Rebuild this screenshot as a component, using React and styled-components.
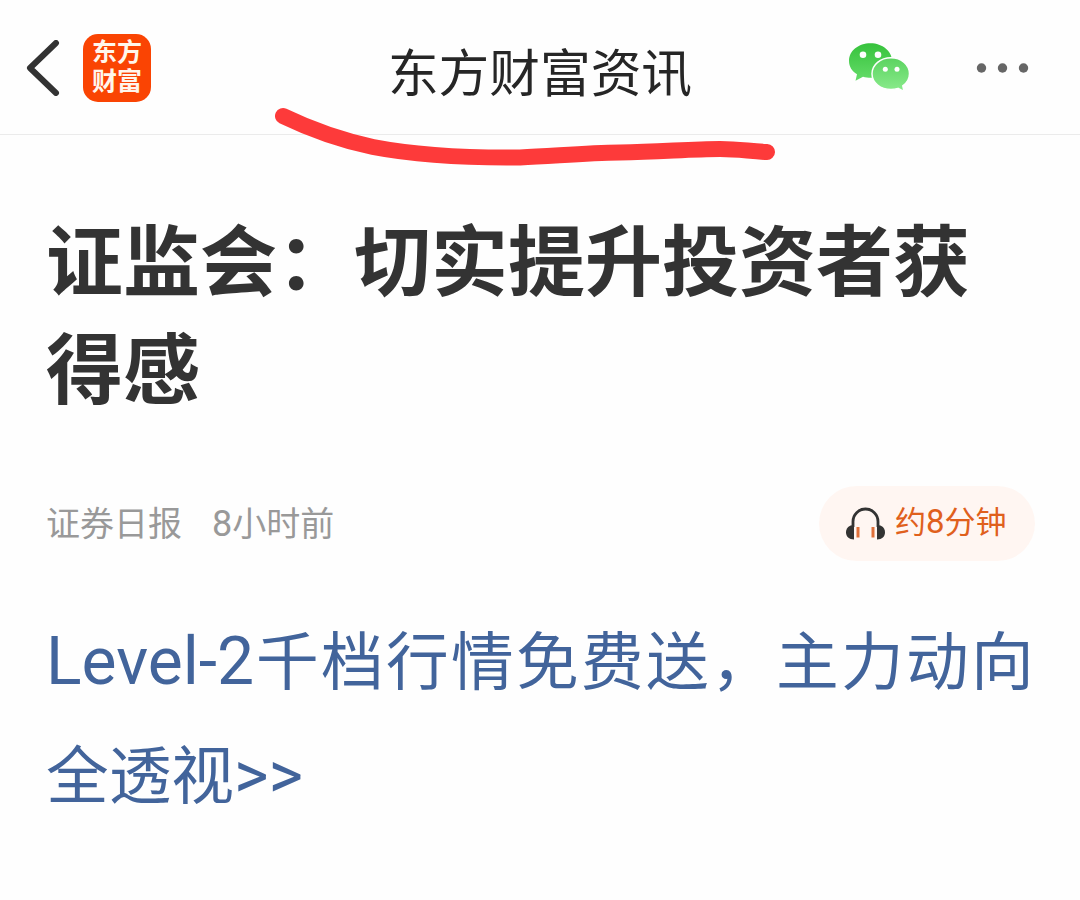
import styled, { createGlobalStyle } from 'styled-components'

const GlobalStyle = createGlobalStyle`
  * {
    box-sizing: border-box;
  }
  body {
    margin: 0;
    background: #fefefe;
    font-family: Roboto, 'Noto Sans CJK SC', sans-serif;
    overflow: hidden;
  }
`

const Page = styled.div`
  position: relative;
  width: 1080px;
  height: 900px;
`

const Header = styled.header`
  display: grid;
  grid-template-columns: 300px 1fr 300px;
  align-items: center;
  height: 135px;
  border-bottom: 1px solid #ebebeb;
`

const HeaderLeft = styled.div`
  display: flex;
  align-items: center;
  gap: 23px;
  padding: 1px 0 0 26px;
`

const HeaderRight = styled.div`
  display: flex;
  align-items: center;
  gap: 66px;
  padding: 1px 0 0 67px;
`

const Logo = styled.div`
  display: flex;
  flex-direction: column;
  align-items: center;
  justify-content: center;
  width: 68px;
  height: 68px;
  padding-bottom: 2px;
  border-radius: 15px;
  background: #fa4403;
  color: #fff6ec;
  font-size: 25px;
  font-weight: 700;
  line-height: 29px;
`

const HeaderTitle = styled.div`
  padding-top: 15px;
  text-align: center;
  color: #262626;
  font-size: 50.7px;
  line-height: 60px;
  white-space: nowrap;
`

const Underline = styled.svg`
  position: absolute;
  top: 100px;
  left: 265px;
`

const Article = styled.main`
  padding: 75px 45px 0 46px;
`

const Headline = styled.h1`
  margin: 0;
  color: #333;
  font-size: 77px;
  font-weight: 700;
  line-height: 108px;
`

const MetaRow = styled.div`
  display: flex;
  align-items: center;
  justify-content: space-between;
  height: 75px;
  margin-top: 60px;
`

const Meta = styled.div`
  display: flex;
  gap: 30px;
  color: #999;
  font-size: 34px;
  line-height: 50px;
`

const ListenButton = styled.button`
  display: flex;
  align-items: center;
  gap: 10px;
  width: 216px;
  height: 75px;
  padding: 0 0 0 27px;
  border: 0;
  border-radius: 38px;
  background: #fff6f2;
  color: #e0601c;
  font-family: inherit;
  font-size: 31px;
  white-space: nowrap;
`

const ListenText = styled.span`
  line-height: 40px;
  padding-bottom: 2px;
`

const Promo = styled.a`
  display: block;
  margin-top: 44px;
  color: #42649b;
  font-size: 62.7px;
  line-height: 113px;
`

const Line = styled.div`
  white-space: nowrap;
  letter-spacing: ${(props) => props.$spacing || '0'};
`

const Latin = styled.span`
  margin-right: ${(props) => props.$gap || '0'};
  font-size: ${(props) => props.$size || '66px'};
  letter-spacing: 0;
`

function BackIcon() {
  return (
    <svg width="34" height="56" viewBox="0 0 34 56" fill="none">
      <path
        d="M30 3 L4 28 L30 53"
        stroke="#333"
        strokeWidth="6"
        strokeLinecap="round"
        strokeLinejoin="round"
      />
    </svg>
  )
}

function WechatIcon() {
  return (
    <svg width="62" height="50" viewBox="0 0.7 62 50">
      <defs>
        <linearGradient id="back" x1="0" y1="0" x2="0" y2="1">
          <stop offset="0" stopColor="#36c23c" />
          <stop offset="1" stopColor="#65dc69" />
        </linearGradient>
        <linearGradient id="front" x1="0" y1="0" x2="0" y2="1">
          <stop offset="0" stopColor="#5bd360" />
          <stop offset="1" stopColor="#8aeb8c" />
        </linearGradient>
      </defs>
      <path
        d="M23.500 1C11.500 1 2 8.500 2 18.500c0 6 3 10.500 8 13.500L8.500 38.500l7.500-4c2.500.8 5 1 8 1 12 0 21-7.500 21-17S35.500 1 23.500 1z"
        fill="url(#back)"
      />
      <path
        d="M44 15.500C33.500 15.500 25 22.500 25 31.500S33.500 47.200 44 47.200c2.500 0 4.800-.4 7-1.100l6 3-1.200-5.500c4-2.800 6.700-7 6.700-12.100C62.500 22.500 54.500 15.500 44 15.500z"
        fill="url(#front)"
        stroke="#fefefe"
        strokeWidth="1.500"
      />
      <g fill="#fefefe">
        <circle cx="16" cy="12.500" r="3.300" />
        <circle cx="31" cy="12.500" r="3.300" />
        <circle cx="38.300" cy="27" r="2.500" />
        <circle cx="50" cy="27" r="2.500" />
      </g>
    </svg>
  )
}

function MoreIcon() {
  return (
    <svg width="54" height="12" viewBox="0 0 54 12" fill="#666">
      <circle cx="6.500" cy="6" r="4.700" />
      <circle cx="27.500" cy="6" r="4.700" />
      <circle cx="48.500" cy="6" r="4.700" />
    </svg>
  )
}

function HeadphonesIcon() {
  return (
    <svg width="39" height="33" viewBox="0 0 39 33">
      <path
        d="M7 20V14.500a12.500 12.500 0 0 1 25 0V20"
        fill="none"
        stroke="#333"
        strokeWidth="2.800"
      />
      <path d="M8 18v14.500C3 32.500 0 29.500 0 25.300S3 18 8 18z" fill="#333" />
      <path d="M31 18v14.500c5 0 8-3 8-7.200S36 18 31 18z" fill="#333" />
      <path d="M12 20v10.500M27 20v10.500" stroke="#e0703a" strokeWidth="3" />
    </svg>
  )
}

function App() {
  return (
    <Page>
      <GlobalStyle />
      <Header>
        <HeaderLeft>
          <BackIcon />
          <Logo>
            <span>东方</span>
            <span>财富</span>
          </Logo>
        </HeaderLeft>
        <HeaderTitle>东方财富资讯</HeaderTitle>
        <HeaderRight>
          <WechatIcon />
          <MoreIcon />
        </HeaderRight>
      </Header>
      <Underline width="520" height="76" viewBox="265 100 520 76">
        <path
          d="M283 116C312 130 345 141 373 147C420 156 470 158 520 157.500C555 156 585 153 620 152.500C660 152 690 149 720 149C740 149 750 151.500 767 152"
          fill="none"
          stroke="#fd3a3a"
          strokeWidth="16"
          strokeLinecap="round"
          strokeLinejoin="round"
        />
      </Underline>
      <Article>
        <Headline>证监会：切实提升投资者获得感</Headline>
        <MetaRow>
          <Meta>
            <span>证券日报</span>
            <span>
              <Latin $size="36px">8</Latin>小时前
            </span>
          </Meta>
          <ListenButton>
            <HeadphonesIcon />
            <ListenText>
              约<Latin $size="33px">8</Latin>分钟
            </ListenText>
          </ListenButton>
        </MetaRow>
        <Promo>
          <Line $spacing="2.3px">
            <Latin $gap="2px">Level-2</Latin>千档行情免费送，主力动向
          </Line>
          <Line>
            全透视<Latin>&gt;&gt;</Latin>
          </Line>
        </Promo>
      </Article>
    </Page>
  )
}

export default App
